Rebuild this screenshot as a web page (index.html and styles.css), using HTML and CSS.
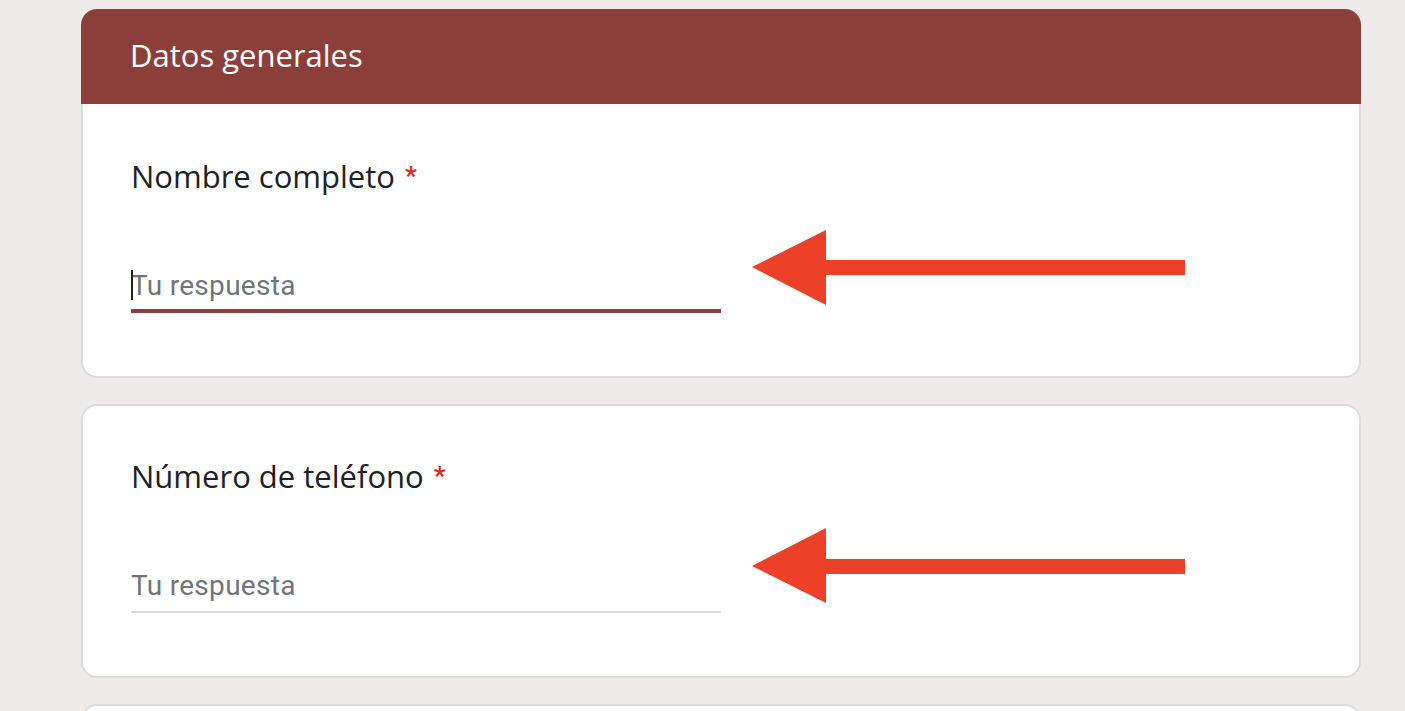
FILE: index.html
```html
<!DOCTYPE html>
<html lang="es">
<head>
<meta charset="utf-8">
<title>Datos generales</title>
<link rel="stylesheet" href="styles.css">
</head>
<body>
<div class="page">
  <section class="card card-first">
    <div class="card-header">
      <h1 class="section-title">Datos generales</h1>
    </div>
    <div class="card-body">
      <div class="question">Nombre completo <span class="req">*</span></div>
      <div class="field field-focused">
        <span class="caret"></span>
        <span class="placeholder">Tu respuesta</span>
      </div>
    </div>
  </section>

  <section class="card">
    <div class="card-body">
      <div class="question">Número de teléfono <span class="req">*</span></div>
      <div class="field">
        <span class="placeholder">Tu respuesta</span>
      </div>
    </div>
  </section>

  <section class="card card-peek"></section>

  <svg class="arrow arrow-1" width="434" height="76" viewBox="0 0 434 76" aria-hidden="true">
    <polygon points="0,37 74,0 74,30 433,30 433,45 74,45 74,75" fill="#ec4128"/>
  </svg>
  <svg class="arrow arrow-2" width="434" height="76" viewBox="0 0 434 76" aria-hidden="true">
    <polygon points="0,38 74,0 74,31 433,31 433,46 74,46 74,75" fill="#ec4128"/>
  </svg>
</div>
</body>
</html>
```
FILE: styles.css
```css
html, body {
  margin: 0;
  padding: 0;
}
body {
  background: #f0ebeb;
  overflow: hidden;
  height: 711px;
}
.page {
  position: relative;
  padding-top: 9px;
  margin-left: 81px;
  width: 1280px;
  display: flex;
  flex-direction: column;
  gap: 26px;
}
.card {
  background: #ffffff;
  border: 2px solid #dcdbdf;
  border-radius: 16px;
  box-sizing: border-box;
  height: 274px;
  flex: none;
}
.card-first {
  height: 369px;
  border-top: none;
}
.card-header {
  height: 95px;
  margin: 0 -2px;
  background: #8b3f3a;
  border-radius: 16px 16px 0 0;
  display: flex;
  align-items: center;
  padding-left: 49px;
  padding-bottom: 3px;
  box-sizing: border-box;
}
.section-title {
  margin: 0;
  font-family: "Open Sans", "Liberation Sans", sans-serif;
  font-weight: 400;
  font-size: 31px;
  line-height: 48px;
  color: #ffffff;
}
.card-body {
  padding: 46px 48px 0 48px;
}
.card-first .card-body {
  padding-top: 48px;
}
.question {
  font-family: "Open Sans", "Liberation Sans", sans-serif;
  font-size: 31px;
  line-height: 48px;
  color: #202124;
  letter-spacing: 0;
}
.req {
  color: #d93025;
  font-family: Roboto, "Liberation Sans", sans-serif;
  font-weight: 700;
  font-size: 26px;
  vertical-align: 3px;
  margin-left: 2px;
}
.field {
  position: relative;
  width: 590px;
  margin-top: 66px;
  padding-bottom: 5px;
  border-bottom: 2px solid #dadce0;
}
.field-focused {
  border-bottom-color: #8b3f3a;
}
.field-focused::after {
  content: "";
  position: absolute;
  left: 0;
  right: 0;
  bottom: -2px;
  height: 4px;
  background: #8b3f3a;
}
.placeholder {
  display: block;
  font-family: Roboto, "Liberation Sans", sans-serif;
  font-size: 28px;
  letter-spacing: 0.3px;
  line-height: 40px;
  color: #70757a;
}
.caret {
  position: absolute;
  left: 0;
  top: 4px;
  width: 2px;
  height: 30px;
  background: #202124;
}
.card-peek {
  height: 200px;
}
.arrow {
  position: absolute;
  left: 671px;
}
.arrow-1 {
  top: 230px;
}
.arrow-2 {
  top: 528px;
}
```
